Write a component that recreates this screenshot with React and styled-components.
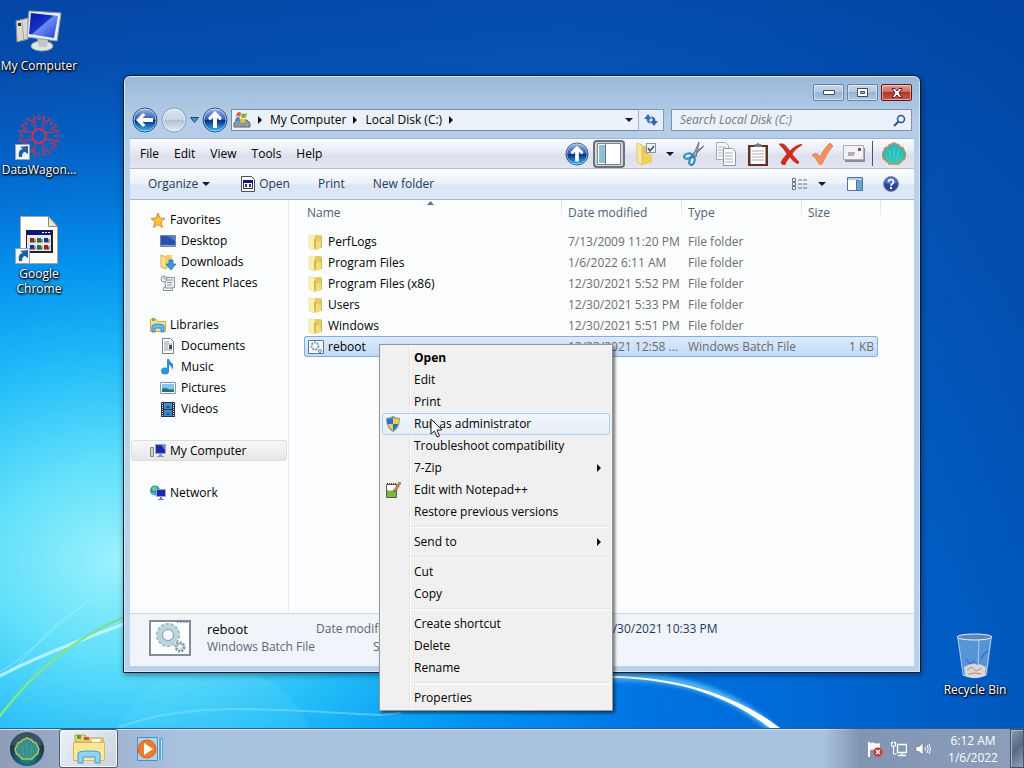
import React from "react";

import styled, { createGlobalStyle } from "styled-components";

const GlobalStyle = createGlobalStyle`
	* {
		box-sizing: border-box;
	}

	body {
		margin: 0;
		overflow: hidden;
		font-family: "Segoe UI", "Open Sans", "Noto Sans", sans-serif;
		font-size: 12px;
		line-height: 16px;
		color: #000;
	}

	button,
	input {
		font: inherit;
		color: inherit;
		padding: 0;
		border: 0;
		background: none;
	}

	a {
		color: inherit;
		text-decoration: none;
	}

	svg {
		display: block;
		flex: none;
	}
`;

const Screen = styled.div`
	display: flex;
	flex-direction: column;
	min-height: 100vh;
`;

const Desktop = styled.main`
	position: relative;
	flex: 1;
	overflow: hidden;
	background: #0a5cc0;
`;

const Paper = styled.svg`
	position: absolute;
	inset: 0;
	width: 100%;
	height: 100%;
`;

const Shortcuts = styled.div`
	position: relative;
	display: flex;
	flex-direction: column;
	gap: 39px;
	width: 78px;
	padding-top: 8px;
`;

const Shortcut = styled.button`
	display: flex;
	flex-direction: column;
	align-items: center;
	gap: 2px;
	width: 78px;
	color: #fff;
	line-height: 15px;
	text-shadow: 0 1px 2px #000, 1px 1px 2px #000, 0 0 3px rgba(0, 0, 0, 0.6);
`;

const BinSlot = styled.div`
	position: absolute;
	right: 10px;
	bottom: 31px;
`;

const Window = styled.section`
	position: absolute;
	top: 75px;
	right: 103px;
	bottom: 55px;
	left: 123px;
	display: flex;
	flex-direction: column;
	padding: 0 6px 6px;
	border: 1px solid #0b1c33;
	border-radius: 7px 7px 1px 1px;
	box-shadow: inset 0 0 0 1px #d8e8f8, 1px 2px 6px rgba(0, 0, 0, 0.4);
	background: linear-gradient(#9ab9d8, #b4cde8 45px, #bbd0ea 120px, #b9d1ea);
`;

const TitleBar = styled.header`
	display: flex;
	justify-content: flex-end;
	gap: 3px;
	height: 28px;
	padding: 8px 2px 0 0;
`;

const CaptionButton = styled.button`
	display: flex;
	align-items: center;
	justify-content: center;
	width: 31px;
	height: 17px;
	border: 1px solid ${(props) => (props.$danger ? "#5c1a1c" : "#6884a8")};
	border-radius: 2px;
	box-shadow: inset 0 0 0 1px rgba(255, 255, 255, 0.45);
	background: ${(props) =>
		props.$danger
			? "linear-gradient(#e0a09a, #cf6a60 45%, #b53428 50%, #cc5a48)"
			: "linear-gradient(#c6d8ec, #b4c9e2 45%, #9ab4d2 50%, #b0c8e2)"};
`;

const NavRow = styled.div`
	display: flex;
	align-items: center;
	height: 34px;
	padding: 0 2px 2px;
`;

const Travel = styled.div`
	display: flex;
	align-items: center;
	gap: 3px;
	margin-right: 3px;
`;

const Address = styled.nav`
	display: flex;
	align-items: center;
	flex: 1;
	height: 22px;
	padding-left: 1px;
	border: 1px solid #7288a4;
	border-right-color: #a0b0c4;
	background: #eaf1f9;

	.crumb {
		margin: 0 7px;
	}

	.drop {
		margin-left: auto;
		padding: 0 5px;
	}
`;

const Refresh = styled.button`
	display: flex;
	align-items: center;
	justify-content: center;
	width: 25px;
	height: 22px;
	border: 1px solid #8499b4;
	border-left: 0;
	background: #e6eef8;
`;

const Search = styled.label`
	display: flex;
	align-items: center;
	width: 241px;
	height: 22px;
	margin-left: 7px;
	padding: 0 5px 0 8px;
	border: 1px solid #7f93ad;
	background: #eaf1f9;

	input {
		flex: 1;
		min-width: 0;
		outline: 0;
	}

	input::placeholder {
		color: #727a84;
		font-style: italic;
		opacity: 1;
	}
`;

const MenuBar = styled.div`
	display: flex;
	align-items: center;
	gap: 15px;
	height: 31px;
	padding: 0 4px 0 10px;
	border-top: 1px solid #a4b4c8;
	border-bottom: 1px solid #b6bccb;
	background: linear-gradient(#f9fafd, #eceff8 35%, #dcdfed 60%, #e6e5f2);
`;

const ToolStrip = styled.div`
	display: flex;
	align-items: center;
	margin-left: auto;

	.gap {
		width: 5px;
	}

	.line {
		width: 1px;
		height: 25px;
		margin: 0 5px 0 2px;
		background: #4c5466;
	}
`;

const Tool = styled.button`
	display: flex;
	align-items: center;
	justify-content: center;
	width: ${(props) => (props.$narrow ? "16px" : "32px")};
	height: 28px;
	border: ${(props) => (props.$pressed ? "2px solid #6f7078" : "0")};
	border-radius: 4px;
	background: ${(props) => (props.$pressed ? "#d3d4dc" : "none")};
`;

const CommandBar = styled.div`
	display: flex;
	align-items: center;
	height: 31px;
	padding: 0 15px 0 18px;
	border-bottom: 1px solid #a9b6c8;
	background: linear-gradient(#fafcff, #edf3fb 45%, #dce6f4 55%, #dde8f6);
	color: #1e395b;

	.views {
		margin-left: auto;
	}
`;

const Command = styled.button`
	display: flex;
	align-items: center;
	gap: 4px;
	margin-right: ${(props) => props.$after || 0}px;
`;

const Content = styled.div`
	display: flex;
	flex: 1;
	min-height: 0;
	background: #fcfdfe;
`;

const Sidebar = styled.nav`
	display: flex;
	flex-direction: column;
	width: 159px;
	padding: 9px 1px 0;
	border-right: 1px solid #e4e9f2;
`;

const Group = styled.div`
	margin-bottom: 21px;
`;

const Place = styled.a`
	display: flex;
	align-items: center;
	gap: ${(props) => (props.$child ? 5 : 4)}px;
	height: 21px;
	padding-left: ${(props) => (props.$child ? 28 : 18)}px;
	border: 1px solid ${(props) => (props.$active ? "#dcdcdc" : "transparent")};
	border-radius: 3px;
	background: ${(props) =>
		props.$active ? "linear-gradient(#f8f8f8, #e6e6e6)" : "none"};
`;

const Listing = styled.div`
	position: relative;
	flex: 1;
	min-width: 0;
	padding-left: 15px;
`;

const FileTable = styled.table`
	width: 577px;
	table-layout: fixed;
	border-collapse: separate;
	border-spacing: 0;

	th {
		height: 31px;
		padding: 0 0 5px 6px;
		background: linear-gradient(#dde3ec, #eef1f6) right top / 1px 18px
			no-repeat;
		color: #4c607a;
		font-weight: normal;
		text-align: left;
	}

	th:first-child {
		padding-left: 3px;
	}

	td {
		height: 21px;
		padding: 0 4px 0 6px;
		color: #6d6d6d;
		white-space: nowrap;
		overflow: hidden;
	}

	td:first-child {
		padding-left: 3px;
		color: #000;
	}

	td:nth-child(4) {
		padding-right: 3px;
		text-align: right;
	}
`;

const FileRow = styled.tr`
	td {
		border: solid ${(props) => (props.$selected ? "#84acdd" : "transparent")};
		border-width: 1px 0;
		background: ${(props) =>
			props.$selected ? "linear-gradient(#dcebfc, #c1dbfc)" : "none"};
	}

	td:first-child {
		border-left-width: 1px;
		border-radius: 3px 0 0 3px;
	}

	td:last-child {
		border-right-width: 1px;
		border-radius: 0 3px 3px 0;
	}
`;

const FileName = styled.span`
	display: flex;
	align-items: center;
	gap: 4px;
`;

const SortMark = styled.svg`
	position: absolute;
	top: 1px;
	left: 138px;
`;

const Details = styled.footer`
	display: flex;
	align-items: flex-start;
	height: 53px;
	padding: 6px 19px;
	border-top: 1px solid #ccd6e4;
	background: linear-gradient(#eff3fa, #f1f5fb);
	color: #1e395b;
	line-height: 18px;
	white-space: nowrap;

	.about {
		width: 109px;
		margin-left: 16px;
	}

	.name {
		color: #000;
		font-size: 13px;
	}

	.dim {
		color: #5a6779;
	}
`;

const Facts = styled.dl`
	display: grid;
	grid-template-columns: 82px auto;
	column-gap: 201px;
	margin: 0;

	dt {
		color: #5a6779;
		text-align: right;
	}

	dd {
		margin: 0;
	}
`;

const ContextMenu = styled.div`
	position: absolute;
	top: 344px;
	left: 379px;
	width: 234px;
	padding: 2px 2px 1px;
	border: 1px solid #979797;
	box-shadow: 2px 2px 3px rgba(0, 0, 0, 0.55);
	background: linear-gradient(90deg, #e2e3e3 1px, #fff 1px) 29px 2px / 2px
		calc(100% - 4px) no-repeat #f0f0f0;
`;

const MenuItem = styled.button`
	display: flex;
	align-items: center;
	width: 100%;
	height: 22px;
	padding-right: 7px;
	border: 1px solid ${(props) => (props.$hot ? "#aecff7" : "transparent")};
	border-radius: 3px;
	background: ${(props) =>
		props.$hot ? "linear-gradient(#f1f6fb, #e5eef8)" : "none"};
	font-weight: ${(props) => (props.$strong ? 700 : 400)};

	.icon {
		width: 31px;
		padding-left: 2px;
	}

	svg:last-child {
		margin-left: auto;
	}

	.icon svg {
		margin: 0;
	}
`;

const Divider = styled.hr`
	height: 2px;
	margin: 3px 0 3px 29px;
	border: 0;
	border-top: 1px solid #e0e0e0;
	background: #fff;
`;

const Cursor = styled.svg`
	position: absolute;
	top: 418px;
	left: 430px;
`;

const Taskbar = styled.footer`
	position: relative;
	display: flex;
	height: 40px;
	padding-left: 8px;
	border-top: 1px solid #2c5d8c;
	box-shadow: inset 0 1px 0 #d4e4f4;
	background: linear-gradient(90deg, #8e9db8, #9fb0cb 90px, #a8c1df 180px);
`;

const StartButton = styled.button`
	width: 38px;
	margin-right: 13px;
`;

const TaskButton = styled.button`
	display: flex;
	align-items: center;
	justify-content: center;
	width: 59px;
	height: 39px;
	margin-right: 2px;
	border: 1px solid ${(props) => (props.$open ? "#4b5c76" : "transparent")};
	border-radius: 3px;
	box-shadow: ${(props) => (props.$open ? "inset 0 0 0 1px #f4f8fc" : "none")};
	background: ${(props) =>
		props.$open ? "linear-gradient(135deg, #eef2f8, #c8d2e2)" : "none"};
`;

const Tray = styled.div`
	display: flex;
	align-items: center;
	margin-left: auto;
	padding-left: 40px;
	background: linear-gradient(90deg, rgba(128, 148, 178, 0), #8195b3 36px, #8b9db9);

	.status {
		width: 24px;
		padding-left: 3px;
	}
`;

const Clock = styled.time`
	width: 74px;
	color: #fff;
	line-height: 17px;
	text-align: center;
`;

const ShowDesktop = styled.button`
	width: 14px;
	height: 39px;
	border: 1px solid #42546c;
	box-shadow: inset 1px 1px 0 #a8b8cc;
	background: linear-gradient(135deg, #8b9bb0, #566a84 50%, #8fa2ba);
`;

/* ---------- drawings ---------- */

function Wallpaper() {
	return (
		<Paper viewBox="0 0 1024 728" preserveAspectRatio="none" aria-hidden="true">
			<defs>
				<linearGradient id="sky" x2="0.15" y2="1">
					<stop offset="0" stopColor="#0547a5" />
					<stop offset="0.4" stopColor="#0761c8" />
					<stop offset="1" stopColor="#007cf0" />
				</linearGradient>
				<radialGradient
					id="glow"
					gradientUnits="userSpaceOnUse"
					cx="0"
					cy="0"
					r="1"
					gradientTransform="translate(120 560) scale(670 500)"
				>
					<stop offset="0" stopColor="#9cf2fc" />
					<stop offset="0.2" stopColor="#5fdffa" />
					<stop offset="0.4" stopColor="#22bcf8" />
					<stop offset="0.6" stopColor="#049af4" stopOpacity="0.85" />
					<stop offset="0.85" stopColor="#0078e0" stopOpacity="0.3" />
					<stop offset="1" stopColor="#0068d0" stopOpacity="0" />
				</radialGradient>
				<linearGradient id="shade" x1="0.55" x2="1">
					<stop offset="0" stopColor="#003e98" stopOpacity="0" />
					<stop offset="1" stopColor="#003e98" stopOpacity="0.6" />
				</linearGradient>
				<linearGradient id="leaf" x1="0" y1="1" x2="1" y2="0">
					<stop offset="0" stopColor="#8cf06e" />
					<stop offset="1" stopColor="#7fdb8a" />
				</linearGradient>
				<filter id="soft">
					<feGaussianBlur stdDeviation="2" />
				</filter>
			</defs>
			<rect width="1024" height="728" fill="url(#sky)" />
			<rect width="1024" height="728" fill="url(#glow)" />
			<rect width="1024" height="728" fill="url(#shade)" />
			<path
				d="M118 728C150 655 270 640 310 728z"
				fill="#8ff0ff"
				opacity="0.1"
			/>
			<g fill="none" strokeLinecap="round">
				<path d="M0 672C30 655 55 625 90 600" stroke="#b8f6ff" opacity="0.6" />
				<path d="M10 672C30 655 45 630 68 615" stroke="#b8f6ff" opacity="0.4" />
				<path
					d="M0 676C30 660 80 640 124 624"
					stroke="#dcfbff"
					strokeWidth="3"
					opacity="0.7"
				/>
				<path
					d="M0 716C30 676 70 640 124 617"
					stroke="url(#leaf)"
					strokeWidth="2"
				/>
				<path
					d="M120 727C190 700 270 710 380 715L400 713"
					stroke="#7fe0ff"
					strokeWidth="2"
					opacity="0.55"
				/>
				<path
					d="M560 680C650 670 720 680 776 732"
					stroke="#6fd0ff"
					strokeWidth="8"
					opacity="0.7"
					filter="url(#soft)"
				/>
			</g>
			<path
				d="M560 679C660 672 720 690 770 728L780 728C725 686 650 670 560 677z"
				fill="#fff"
			/>
		</Paper>
	);
}

function MonitorIcon() {
	return (
		<svg width="48" height="48" viewBox="0 0 48 48">
			<defs>
				<linearGradient id="crt" x2="1" y2="1">
					<stop offset="0" stopColor="#0a1896" />
					<stop offset="0.45" stopColor="#1330c8" />
					<stop offset="0.5" stopColor="#6e8cf0" />
					<stop offset="1" stopColor="#1d3fd8" />
				</linearGradient>
			</defs>
			<path d="M1 13l12-3v21L2 34z" fill="#d8d8d4" stroke="#8c8c88" />
			<path d="M3 15h3v3H3z" fill="#333" />
			<path d="M7 14l2 19" stroke="#a4a4a0" />
			<ellipse cx="27" cy="38" rx="11" ry="5" fill="#e4e6e6" stroke="#96a0a4" />
			<path d="M22 30l11 2-1 7h-8z" fill="#bfc6ca" />
			<path d="M14 3l32 2-4 28-30-4z" fill="#e8ecee" stroke="#98a2a8" />
			<path d="M16 5l27 3-4 22-25-4z" fill="url(#crt)" />
		</svg>
	);
}

function ShortcutArrow() {
	return (
		<g>
			<path d="M.5 32.500h14v15H.5z" fill="#f2f6fb" stroke="#9aa6b4" />
			<path
				d="M4 45c-1-5 1-8 4-8l-3-2 8-1v8l-3-2c-2 0-3 2-3 5z"
				fill="#1d5fa8"
			/>
		</g>
	);
}

function DataWagonIcon() {
	const turns = [0, 45, 90, 135, 180, 225, 270, 315];
	return (
		<svg width="48" height="48" viewBox="0 0 48 48">
			<g fill="none" stroke="#b83a58" strokeWidth="0.900">
				{turns.map((turn) => (
					<g key={turn} transform={`rotate(${turn} 24 24)`}>
						<path d="M24 18L17 12 20 4 24 8 28 4 31 12z" />
						<path d="M17 12L13 5M31 12L35 5M24 8V2" />
						<path d="M20 19q4-4 8 0" stroke="#d83048" strokeWidth="1.500" />
					</g>
				))}
			</g>
			<ShortcutArrow />
		</svg>
	);
}

function ProgramPageIcon() {
	const dots = ["#a81c1c", "#187a3c", "#1c2ca0"];
	return (
		<svg width="48" height="48" viewBox="0 0 48 48">
			<path d="M5.500.5h28l9 10v37h-37z" fill="#fff" stroke="#a8a88c" />
			<path d="M33.500.5v10h9z" fill="#e4e4da" stroke="#8c8c78" />
			<path d="M11 14h27v23H11z" fill="#222" />
			<path d="M12 15h24v4H12z" fill="#10128c" />
			<path d="M27 16h2v1h-2zm3 0h2v1h-2zm3 0h2v1h-2z" fill="#fff" />
			<path d="M12 19h24v16H12z" fill="#e6e6e6" />
			{dots.map((color, i) => (
				<g key={color}>
					<path d={`M${15 + i * 7} 22h4v4h-4z`} fill={color} />
					<path d={`M${15 + i * 7} 29h4v4h-4z`} fill={dots[2 - i]} />
					<path
						d={`M${15 + i * 7} 26h5v-3M${15 + i * 7} 33h5v-3`}
						fill="none"
						stroke="#444"
					/>
				</g>
			))}
			<ShortcutArrow />
		</svg>
	);
}

function BinIcon() {
	return (
		<svg width="48" height="48" viewBox="0 0 48 48">
			<path d="M6 5h35l-5 38q-12 6-24 0z" fill="#7cace0" opacity="0.7" />
			<path d="M13 35q11-7 22 0l-1 8q-10 5-20 0z" fill="#dcd6d4" />
			<path d="M16 38l5-3 4 4 6-3M17 42l7-1 6 1" stroke="#b08c7c" fill="none" />
			<path d="M15 27l4 5 3-3 5 4" stroke="#3c5cc0" fill="none" />
			<path d="M7 6l5 37M40 6l-5 37M28 8l-1 26" stroke="#dceeff" opacity="0.6" />
			<path d="M37 19q-4 1-7 8" stroke="#2a5aa0" fill="none" />
			<ellipse cx="23.500" cy="5" rx="17.500" ry="3" fill="#5c86b8" stroke="#e6f0f8" />
			<path d="M12 43q11 5 23 0" stroke="#fff" fill="none" opacity="0.8" />
		</svg>
	);
}

function OrbIcon({ size, kind, id }) {
	const idle = kind === "forward";
	const arrow =
		kind === "up"
			? "M13 4l7 7-2 2.500-3-3V21h-4V10.500l-3 3L6 11z"
			: "M4 13l7-7 2.500 2-3 3H21v4H10.500l3 3-2.500 2z";
	return (
		<svg width={size} height={size} viewBox="0 0 26 26">
			<defs>
				<linearGradient id={id} x2="0" y2="1">
					<stop offset="0" stopColor={idle ? "#dce8f2" : "#a8b8e8"} />
					<stop offset="0.48" stopColor={idle ? "#c8d6e4" : "#2c5cb0"} />
					<stop offset="0.52" stopColor={idle ? "#b0c2d4" : "#082c84"} />
					<stop offset="1" stopColor={idle ? "#e4eef6" : "#38c4f8"} />
				</linearGradient>
			</defs>
			<circle cx="13" cy="13" r="12" fill={`url(#${id})`} stroke={idle ? "#8799ae" : "#30538c"} />
			<circle cx="13" cy="13" r="11" fill="none" stroke="#fff" opacity="0.5" />
			{!idle && <path d={arrow} fill="#fff" />}
		</svg>
	);
}

function DownArrow() {
	return (
		<svg width="8" height="4" viewBox="0 0 8 4">
			<path d="M0 0h8L4 4z" fill="#111c2c" />
		</svg>
	);
}

function SideArrow() {
	return (
		<svg width="5" height="8" viewBox="0 0 5 8">
			<path d="M0 0l4 4-4 4z" fill="#111" />
		</svg>
	);
}

function DriveIcon() {
	return (
		<svg width="18" height="18" viewBox="0 0 18 18">
			<path d="M1 12l3-3h10l3 3v4H1z" fill="#8d989e" stroke="#667" />
			<path d="M13 14h2" stroke="#50e050" strokeWidth="2" />
			<path d="M4 2q3-2 4 0L7 6Q5 4 3 6z" fill="#e85c28" />
			<path d="M9 2q2 2 5 0l-1 4q-3 2-5 0z" fill="#6cb83c" />
			<path d="M3 7q2-2 4 0l-1 3q-2-1-4 0z" fill="#3c84d8" />
			<path d="M8 7q2 2 5 0l-1 4q-3 1-5 0z" fill="#f0c030" />
		</svg>
	);
}

function RefreshIcon() {
	return (
		<svg width="14" height="14" viewBox="0 0 14 14">
			<path d="M4 1L0 6h2.500q0 4 4.500 5-2-2-1.500-5H8z" fill="#2c78c4" />
			<path d="M10 13l4-5h-2.500q0-4-4.500-5 2 2 1.500 5H6z" fill="#3a60a8" />
		</svg>
	);
}

function LensIcon() {
	return (
		<svg width="13" height="13" viewBox="0 0 13 13">
			<circle cx="8" cy="5" r="3.500" fill="#e4f2fc" stroke="#2c5488" strokeWidth="1.500" />
			<path d="M5.500 7.500L1 12" stroke="#2c5488" strokeWidth="2" />
		</svg>
	);
}

function LayoutIcon() {
	return (
		<svg width="24" height="22" viewBox="0 0 24 22">
			<path d="M.5.5h23v21H.5z" fill="#fff" stroke="#7c8490" />
			<path d="M2 2h6v18H2z" fill="#8cc0d8" />
			<path d="M8.500 1v20" stroke="#6d7684" />
		</svg>
	);
}

function FolderOptionsIcon() {
	return (
		<svg width="22" height="24" viewBox="0 0 22 24">
			<path d="M2 1l5 2v20l-5-3z" fill="#f8e8a0" stroke="#e4c868" />
			<path d="M7 4h6v17l-6 2z" fill="#e8c450" />
			<path d="M8 12h9v9l-9 1z" fill="#f0d060" />
			<path d="M11.500 1.500h9v9h-9z" fill="#f4f8fc" stroke="#8494a4" />
			<path d="M13 6l2 3 4-5" fill="none" stroke="#284c88" strokeWidth="1.500" />
		</svg>
	);
}

function ScissorsIcon() {
	return (
		<svg width="24" height="26" viewBox="0 0 24 26">
			<path d="M17 1l-3 15-3-1zM22 5L11 16l-2-2z" fill="#d4d8e0" stroke="#606c90" />
			<g fill="none" stroke="#2c8cbc" strokeWidth="2">
				<ellipse cx="6" cy="15" rx="4" ry="2.500" transform="rotate(-20 6 15)" />
				<ellipse cx="10" cy="20" rx="2.500" ry="4" transform="rotate(20 10 20)" />
			</g>
		</svg>
	);
}

function CopyIcon() {
	return (
		<svg width="22" height="24" viewBox="0 0 22 24">
			<path d="M1.500.5h9l3 3v14h-12z" fill="#f8f8fa" stroke="#a4a8b0" />
			<path d="M3 5h8M3 8h8M3 11h8M3 14h8" stroke="#b4b8c0" />
			<path d="M8.500 6.500h9l3 3v14h-12z" fill="#fff" stroke="#9094a0" />
			<path d="M10 11h8M10 14h8M10 17h8M10 20h8" stroke="#9cacc4" />
		</svg>
	);
}

function ClipboardIcon() {
	return (
		<svg width="20" height="24" viewBox="0 0 20 24">
			<path d="M0 3h20v21H0z" fill="#5c3420" />
			<path d="M2.500 5h15v17h-15z" fill="#fff" />
			<path d="M6 5l1-3h2l1-2 1 2h2l1 3z" fill="#787c84" />
			<path d="M4 9h12M4 12h12M4 15h12M4 18h12" stroke="#b0b0b4" />
		</svg>
	);
}

function CrossIcon() {
	return (
		<svg width="24" height="22" viewBox="0 0 24 22">
			<path
				d="M1 1q4-1 6 1l5 6q4-5 11-7l1 1q-6 3-10 9 4 5 7 8l-1 2q-5-2-8-7-4 4-5 8-4 0-4-3 3-5 6-8Q6 6 1 1z"
				fill="#d02c20"
				stroke="#a82418"
				strokeWidth="0.500"
			/>
		</svg>
	);
}

function CheckIcon() {
	return (
		<svg width="22" height="22" viewBox="0 0 22 22">
			<path
				d="M1 12l4-2q3 2 4 4 4-9 10-14l3 3Q15 11 11 21q-1 1-3 0-2-5-7-9z"
				fill="#f4905c"
				stroke="#d87444"
				strokeWidth="0.700"
			/>
		</svg>
	);
}

function MailIcon() {
	return (
		<svg width="22" height="17" viewBox="0 0 22 17">
			<path d="M2 3h20v14H2z" fill="#8c8c94" />
			<path d="M.5.5h20v14H.5z" fill="#f2f2f4" stroke="#acacb4" />
			<path d="M5 8h7M5 10h6" stroke="#686870" />
			<path d="M15 3h3v3h-3z" fill="#984850" />
		</svg>
	);
}

function ShellShape({ fill, stroke }) {
	return (
		<path
			d="M7 22q0-2-2-2-1 0-1-2-3 0-3-3-2-4 1-6 0-4 4-4 1-3 4-3 2-2 4 0 3 0 4 3 4 0 4 4 3 2 1 6 0 3-3 3 0 2-1 2-2 0-2 2z"
			fill={fill}
			stroke={stroke}
			strokeWidth="1.500"
		/>
	);
}

function ShellIcon() {
	return (
		<svg width="24" height="24" viewBox="0 0 24 24">
			<ShellShape fill="#2cbcb8" stroke="#b8945c" />
			<path
				d="M12 21V6M10 21L7 8M14 21l3-13M8 21l-4-8M16 21l4-8"
				stroke="#58dcd0"
				strokeWidth="0.800"
				fill="none"
			/>
		</svg>
	);
}

function StartOrb() {
	return (
		<svg width="38" height="38" viewBox="0 0 38 38">
			<defs>
				<radialGradient id="orb" cy="0.7">
					<stop offset="0" stopColor="#2ba0a4" />
					<stop offset="0.6" stopColor="#1c5c70" />
					<stop offset="1" stopColor="#183448" />
				</radialGradient>
			</defs>
			<circle cx="19" cy="19" r="17.500" fill="url(#orb)" stroke="#8ca8b8" />
			<path d="M4 15a15 15 0 0 1 30 0q-15 5-30 0z" fill="#fff" opacity="0.15" />
			<g transform="translate(7 7)">
				<ShellShape fill="#358f8c" stroke="#b0c850" />
				<path
					d="M12 20V7M9 20L7 9M15 20l2-11"
					stroke="#54a8a0"
					strokeWidth="0.800"
					fill="none"
				/>
			</g>
		</svg>
	);
}

function BatchPageIcon() {
	return (
		<svg width="14" height="16" viewBox="0 0 14 16">
			<path d="M.5.5h10l3 3v12H.5z" fill="#fff" stroke="#48505c" />
			<path d="M2.500 4.500h9v8h-9z" fill="#fff" stroke="#333" />
			<path d="M2 4h10v3H2z" fill="#14148c" />
			<path d="M4 8h2v3H4zM8 8h2v3H8z" fill="#444" />
		</svg>
	);
}

function ViewsIcon() {
	return (
		<svg width="15" height="13" viewBox="0 0 15 13">
			<g fill="#fff" stroke="#60748c">
				<path d="M.5.5h3v3h-3zM.5 4.500h3v3h-3zM.5 8.500h3v3h-3z" />
			</g>
			<path d="M6 2h9M6 6h9M6 10h9" stroke="#60748c" strokeDasharray="4 1" />
		</svg>
	);
}

function PreviewIcon() {
	return (
		<svg width="16" height="14" viewBox="0 0 16 14">
			<path d="M.5.5h15v13H.5z" fill="#fff" stroke="#4c74a0" />
			<path d="M1 1h14v2H1z" fill="#b4cce4" />
			<path d="M10 3h5v10h-5z" fill="#6ca4cc" />
			<path d="M9.500 3v10" stroke="#4c74a0" />
		</svg>
	);
}

function HelpIcon() {
	return (
		<svg width="16" height="16" viewBox="0 0 16 16">
			<circle cx="8" cy="8" r="7.500" fill="#2c449c" stroke="#8494b4" />
			<path d="M2 7a6 6 0 0 1 12 0q-6 2-12 0z" fill="#7c94d8" opacity="0.6" />
			<path
				d="M5.500 6q0-2.500 2.500-2.500T10.500 6q0 1-1.500 2-1 .7-1 2"
				fill="none"
				stroke="#fff"
				strokeWidth="1.600"
			/>
			<path d="M7 11h2v2H7z" fill="#fff" />
		</svg>
	);
}

const icons = {
	star: (
		<path
			d="M8 1l2 5 5 .5-4 3.500 1.500 5.500L8 12.500l-4.500 3L5 10 1 6.500 6 6z"
			fill="#fcc43c"
			stroke="#d8882c"
		/>
	),
	desktop: (
		<g>
			<path d="M.5 2.500h15v11H.5z" fill="#2c50b0" stroke="#6c84b0" />
			<path d="M7 3h8v5z" fill="#5080d0" />
			<path d="M1 12h14v1H1z" fill="#8ca4cc" />
		</g>
	),
	downloads: (
		<g>
			<path d="M1 1l5 2v12l-5-2z" fill="#f8e48c" stroke="#d0ac48" />
			<path d="M6 1h6v13H6z" fill="#ecd070" />
			<path d="M9 6h4v4h3l-5 6-5-6h3z" fill="#3c98e0" stroke="#1c64ac" strokeWidth="0.700" />
		</g>
	),
	recent: (
		<g fill="#eef0f0" stroke="#8c9498">
			<path d="M4.500 2.500h10v10h-2v3h-9v-3h2z" />
			<path d="M7 5h6M7 7.500h5M7 10h5M6 13h6" />
			<circle cx="4" cy="4" r="3" />
			<path d="M4 2v2h2" fill="none" />
		</g>
	),
	libraries: (
		<g>
			<path d="M.5 2.500h6l1 2h8v10H.5z" fill="#f4e090" stroke="#ccac50" />
			<path d="M2 1h3v3H2z" fill="#74b44c" />
			<path d="M2 15V9q0-2 6-2t6 2v6h-3v-4H5v4z" fill="#6cb8e8" stroke="#3c88c4" />
		</g>
	),
	documents: (
		<g>
			<path d="M2.500.5h8l3 3v12h-11z" fill="#fff" stroke="#78808c" />
			<path d="M4 4h5M4 6h8M4 8h4M4 10h4M4 12h8" stroke="#8c98a8" />
			<path d="M9 7h3v4H9z" fill="#3c4c68" />
		</g>
	),
	music: (
		<g fill="#2c94d4">
			<ellipse cx="5" cy="12" rx="4" ry="3.500" />
			<path d="M7 0h2q1 3 4 5 1 3-1 6 0-4-3-5v7H7z" />
		</g>
	),
	pictures: (
		<g>
			<path d="M.5 2.500h15v11H.5z" fill="#fff" stroke="#7c98b4" />
			<path d="M2 4h12v8H2z" fill="#80c8ec" />
			<path d="M2 9q3-2 6 0 3 1 6 0v3H2z" fill="#2c7068" />
		</g>
	),
	videos: (
		<g>
			<path d="M1 1h14v15H1z" fill="#283040" />
			<path d="M4 2h8v6H4zM4 9h8v6H4z" fill="#3c90d0" />
			<path d="M5 7l3-3 3 3zM5 14l3-3 3 3z" fill="#285c98" />
			<path d="M2.500 2v13M13.500 2v13" stroke="#e4e8ec" strokeDasharray="1 1" />
		</g>
	),
	computer: (
		<g>
			<path d="M.5 4.500h3v9h-3z" fill="#ccd0d0" stroke="#888" />
			<path d="M5.500 1.500h10v9h-10z" fill="#1828b0" stroke="#98a8c4" />
			<path d="M11 2h4v5z" fill="#6c84e4" />
			<path d="M9 11h3v2h2v1H7v-1h2z" fill="#8c98a8" />
		</g>
	),
	network: (
		<g>
			<circle cx="5" cy="5.500" r="5" fill="#2c98b8" />
			<path d="M2 3q3-3 5 0-1 3-4 3zM2 8h3l-1 2z" fill="#78d468" />
			<path d="M6.500 4.500h9v7h-9z" fill="#1828b8" stroke="#94a8d0" />
			<path d="M10 12h2v2h2v1H8v-1h2z" fill="#70809c" />
		</g>
	),
	folder: (
		<g>
			<path d="M1 1l6 1v14l-6-2z" fill="#f8f0b0" stroke="#e4d480" strokeWidth="0.500" />
			<path d="M7 1h6v13l-6 2z" fill="#e4cc60" />
			<path d="M6 5l2-1v9l-2 2z" fill="#d8b848" />
			<path d="M8 7q3 0 5 1v6l-5 1z" fill="#f0dc80" />
			<path d="M13 2h1v12h-1z" fill="#d0b858" />
		</g>
	),
	batch: (
		<g>
			<path d="M.5 1.500h15v13H.5z" fill="#f8fcff" stroke="#607890" />
			<circle
				cx="7"
				cy="7"
				r="3.500"
				fill="none"
				stroke="#7898b4"
				strokeWidth="2"
				strokeDasharray="2 1"
			/>
			<circle cx="12" cy="12" r="1.500" fill="none" stroke="#6080a0" />
		</g>
	),
	shield: (
		<g>
			<path d="M8 0q3 2 7 2 0 10-7 14Q1 12 1 2q4 0 7-2z" fill="#8494a8" />
			<path d="M8 2v6H2.500L2 3q3 0 6-1zM8 8h5q-1 4-5 6z" fill="#2c74c8" />
			<path d="M8 2q3 1 6 1l-.5 5H8zM3 8h5v6Q4 12 3 8z" fill="#f4cc40" />
		</g>
	),
	notepad: (
		<g>
			<path d="M1.500 2.500h10v13h-10z" fill="#fff" stroke="#586058" />
			<path d="M2 8q5 2 9-2v9H2z" fill="#78b83c" />
			<path d="M2 2h9" stroke="#444" strokeDasharray="1 1" strokeWidth="2" />
			<path d="M14 0l2 1-5 8-2 1v-2z" fill="#d88c3c" stroke="#484838" strokeWidth="0.500" />
		</g>
	),
	flag: (
		<g>
			<path d="M2 1v15" stroke="#fff" strokeWidth="2" />
			<path d="M3 2q3-1 5 0t5 0v7q-3 1-5 0T3 9z" fill="#fff" opacity="0.900" />
			<circle cx="11" cy="11" r="4.500" fill="#d03028" />
			<path d="M9 9l4 4m0-4l-4 4" stroke="#fff" strokeWidth="1.500" />
		</g>
	),
	lan: (
		<g fill="none" stroke="#fff">
			<path d="M6.500 3.500h9v8h-9zM11 12v2M7 14.500h8" strokeWidth="1.400" />
			<path d="M.5 1v4h4V1M2.500 5v8h3M1.500.5v2M3.500.5v2" />
		</g>
	),
	sound: (
		<g>
			<path d="M1 5.500h3L8 2v12l-4-3.500H1z" fill="#fff" stroke="#4c5c74" strokeWidth="0.500" />
			<path
				d="M10 6q1 2 0 4M12 4q2.500 4 0 8M14 3q3 5 0 10"
				fill="none"
				stroke="#fff"
			/>
		</g>
	),
};

function Icon({ name }) {
	return (
		<svg width="16" height="16" viewBox="0 0 16 16" aria-hidden="true">
			{icons[name]}
		</svg>
	);
}

function GearsThumb() {
	return (
		<svg width="42" height="36" viewBox="0 0 42 36">
			<path d="M1 1h40v34H1z" fill="#fbfdfe" stroke="#848c98" strokeWidth="2" />
			<circle
				cx="19"
				cy="15"
				r="9"
				fill="none"
				stroke="#9cb8c4"
				strokeWidth="6"
				strokeDasharray="3 1"
			/>
			<circle cx="19" cy="15" r="8" fill="none" stroke="#bcd4dc" strokeWidth="5" />
			<circle cx="19" cy="15" r="5.500" fill="#f4fafc" stroke="#7c98a8" />
			<circle
				cx="31"
				cy="27"
				r="4"
				fill="#e8f0f4"
				stroke="#8098a8"
				strokeWidth="3"
				strokeDasharray="2 1"
			/>
			<path d="M28 2h11" stroke="#667" strokeDasharray="2 1" />
		</svg>
	);
}

function ExplorerIcon() {
	return (
		<svg width="34" height="30" viewBox="0 0 34 30">
			<path d="M3 1h10l2 3h16v4H3z" fill="#ecd47c" stroke="#c8a440" />
			<path d="M5 1h4v4H5z" fill="#5ca04c" />
			<path d="M12 3h5v3h-5z" fill="#c8583c" />
			<path d="M20 5h8v3h-8z" fill="#f4f8ff" />
			<path d="M1.500 8.500h31v18h-31z" fill="#f8e898" stroke="#d8b858" />
			<path
				d="M6 29V19q1-2 11-2t11 2v10h-5v-6H11v6z"
				fill="#90d4f4"
				stroke="#4498cc"
			/>
		</svg>
	);
}

function PlayerIcon() {
	return (
		<svg width="28" height="26" viewBox="0 0 28 26">
			<path d="M8 2h19v23H8z" fill="#5ca4d4" />
			<path d="M22.500 2v23M25.500 3v22" stroke="#c8e4f4" />
			<path d="M1.500 1.500h20v23h-20z" fill="#a8d4f0" stroke="#4c90c0" />
			<circle cx="11" cy="13" r="9" fill="#f07c28" stroke="#d86018" />
			<path d="M8 7l9 6-9 6z" fill="#fff" />
		</svg>
	);
}

/* ---------- data ---------- */

const places = [
	["star", "Favorites", [["desktop", "Desktop"], ["downloads", "Downloads"], ["recent", "Recent Places"]]],
	["libraries", "Libraries", [["documents", "Documents"], ["music", "Music"], ["pictures", "Pictures"], ["videos", "Videos"]]],
	["computer", "My Computer", []],
	["network", "Network", []],
];

const files = [
	["PerfLogs", "7/13/2009 11:20 PM", "File folder", ""],
	["Program Files", "1/6/2022 6:11 AM", "File folder", ""],
	["Program Files (x86)", "12/30/2021 5:52 PM", "File folder", ""],
	["Users", "12/30/2021 5:33 PM", "File folder", ""],
	["Windows", "12/30/2021 5:51 PM", "File folder", ""],
	["reboot", "12/23/2021 12:58 ...", "Windows Batch File", "1 KB"],
];

const menuItems = [
	{ label: "Open", strong: true },
	{ label: "Edit" },
	{ label: "Print" },
	{ label: "Run as administrator", icon: "shield", hot: true },
	{ label: "Troubleshoot compatibility" },
	{ label: "7-Zip", more: true },
	{ label: "Edit with Notepad++", icon: "notepad" },
	{ label: "Restore previous versions" },
	null,
	{ label: "Send to", more: true },
	null,
	{ label: "Cut" },
	{ label: "Copy" },
	null,
	{ label: "Create shortcut" },
	{ label: "Delete" },
	{ label: "Rename" },
	null,
	{ label: "Properties" },
];

/* ---------- parts ---------- */

function ExplorerWindow() {
	return (
		<Window aria-label="Local Disk (C:)">
			<TitleBar>
				<CaptionButton aria-label="Minimize">
					<svg width="12" height="5" viewBox="0 0 12 5">
						<path d="M.5.5h11v4H.5z" fill="#fff" stroke="#3c4c64" />
					</svg>
				</CaptionButton>
				<CaptionButton aria-label="Maximize">
					<svg width="11" height="9" viewBox="0 0 11 9">
						<path d="M.5.5h10v8H.5z" fill="#fff" stroke="#3c4c64" />
						<path d="M3.500 3.500h4v2h-4z" fill="#a4bcd8" stroke="#3c4c64" />
					</svg>
				</CaptionButton>
				<CaptionButton aria-label="Close" $danger>
					<svg width="12" height="10" viewBox="0 0 12 10">
						<path
							d="M1 .5h3l2 2.500 2-2.500h3L8 5l3 4.500H8L6 7 4 9.500H1L4 5z"
							fill="#fff"
							stroke="#542428"
						/>
					</svg>
				</CaptionButton>
			</TitleBar>

			<NavRow>
				<Travel>
					<button aria-label="Back">
						<OrbIcon size={26} kind="back" id="orbBack" />
					</button>
					<button aria-label="Forward">
						<OrbIcon size={26} kind="forward" id="orbForward" />
					</button>
					<button aria-label="Recent pages">
						<svg width="9" height="6" viewBox="0 0 9 6">
							<path d="M.5.500h8l-4 5z" fill="#4c94d0" stroke="#204878" />
						</svg>
					</button>
					<button aria-label="Up">
						<OrbIcon size={26} kind="up" id="orbUp" />
					</button>
				</Travel>
				<Address aria-label="Address">
					<DriveIcon />
					<button className="crumb" aria-label="Root">
						<SideArrow />
					</button>
					<button>My Computer</button>
					<span className="crumb">
						<SideArrow />
					</span>
					<button>Local Disk (C:)</button>
					<span className="crumb">
						<SideArrow />
					</span>
					<button className="drop" aria-label="Previous locations">
						<DownArrow />
					</button>
				</Address>
				<Refresh aria-label="Refresh">
					<RefreshIcon />
				</Refresh>
				<Search>
					<input
						type="text"
						aria-label="Search"
						placeholder="Search Local Disk (C:)"
					/>
					<LensIcon />
				</Search>
			</NavRow>

			<MenuBar>
				<button>File</button>
				<button>Edit</button>
				<button>View</button>
				<button>Tools</button>
				<button>Help</button>
				<ToolStrip>
					<Tool aria-label="Up one level">
						<OrbIcon size={24} kind="up" id="orbTool" />
					</Tool>
					<Tool aria-label="Navigation pane" $pressed>
						<LayoutIcon />
					</Tool>
					<span className="gap" />
					<Tool aria-label="Folder options">
						<FolderOptionsIcon />
					</Tool>
					<Tool aria-label="More folder options" $narrow>
						<DownArrow />
					</Tool>
					<Tool aria-label="Cut">
						<ScissorsIcon />
					</Tool>
					<Tool aria-label="Copy">
						<CopyIcon />
					</Tool>
					<Tool aria-label="Paste">
						<ClipboardIcon />
					</Tool>
					<Tool aria-label="Delete">
						<CrossIcon />
					</Tool>
					<Tool aria-label="Properties">
						<CheckIcon />
					</Tool>
					<Tool aria-label="E-mail">
						<MailIcon />
					</Tool>
					<span className="line" />
					<Tool aria-label="Classic Shell">
						<ShellIcon />
					</Tool>
				</ToolStrip>
			</MenuBar>

			<CommandBar>
				<Command $after={31}>
					Organize <DownArrow />
				</Command>
				<Command $after={28}>
					<BatchPageIcon /> Open
				</Command>
				<Command $after={28}>Print</Command>
				<Command>New folder</Command>
				<Command className="views" aria-label="Change your view" $after={11}>
					<ViewsIcon />
				</Command>
				<Command aria-label="More options" $after={21}>
					<DownArrow />
				</Command>
				<Command aria-label="Preview pane" $after={20}>
					<PreviewIcon />
				</Command>
				<Command aria-label="Help">
					<HelpIcon />
				</Command>
			</CommandBar>

			<Content>
				<Sidebar aria-label="Places">
					{places.map(([icon, label, children]) => (
						<Group key={label}>
							<Place href="#" $active={label === "My Computer"}>
								<Icon name={icon} />
								{label}
							</Place>
							{children.map(([childIcon, childLabel]) => (
								<Place key={childLabel} href="#" $child>
									<Icon name={childIcon} />
									{childLabel}
								</Place>
							))}
						</Group>
					))}
				</Sidebar>
				<Listing>
					<SortMark width="7" height="4" viewBox="0 0 7 4">
						<path d="M0 4l3.500-4L7 4z" fill="#5c7490" />
					</SortMark>
					<FileTable>
						<colgroup>
							<col style={{ width: 258 }} />
							<col style={{ width: 120 }} />
							<col style={{ width: 120 }} />
							<col style={{ width: 76 }} />
							<col style={{ width: 3 }} />
						</colgroup>
						<thead>
							<tr>
								<th>Name</th>
								<th>Date modified</th>
								<th>Type</th>
								<th colSpan="2">Size</th>
							</tr>
						</thead>
						<tbody>
							{files.map(([name, date, type, size]) => (
								<FileRow key={name} $selected={name === "reboot"}>
									<td>
										<FileName>
											<Icon name={name === "reboot" ? "batch" : "folder"} />
											{name}
										</FileName>
									</td>
									<td>{date}</td>
									<td>{type}</td>
									<td>{size}</td>
								</FileRow>
							))}
						</tbody>
					</FileTable>
				</Listing>
			</Content>

			<Details>
				<GearsThumb />
				<div className="about">
					<div className="name">reboot</div>
					<div className="dim">Windows Batch File</div>
				</div>
				<Facts>
					<dt>Date modified:</dt>
					<dd>12/30/2021 10:33 PM</dd>
					<dt>Size:</dt>
				</Facts>
			</Details>
		</Window>
	);
}

function FileMenu() {
	return (
		<ContextMenu role="menu">
			{menuItems.map((item, index) =>
				item ? (
					<MenuItem
						key={item.label}
						role="menuitem"
						$hot={item.hot}
						$strong={item.strong}
					>
						<span className="icon">{item.icon && <Icon name={item.icon} />}</span>
						{item.label}
						{item.more && <SideArrow />}
					</MenuItem>
				) : (
					<Divider key={index} />
				)
			)}
		</ContextMenu>
	);
}

function App() {
	return (
		<Screen>
			<GlobalStyle />
			<Desktop>
				<Wallpaper />
				<Shortcuts>
					<Shortcut>
						<MonitorIcon />
						My Computer
					</Shortcut>
					<Shortcut>
						<DataWagonIcon />
						DataWagon...
					</Shortcut>
					<Shortcut>
						<ProgramPageIcon />
						Google Chrome
					</Shortcut>
				</Shortcuts>
				<BinSlot>
					<Shortcut>
						<BinIcon />
						Recycle Bin
					</Shortcut>
				</BinSlot>
				<ExplorerWindow />
				<FileMenu />
				<Cursor width="14" height="20" viewBox="0 0 14 20">
					<path
						d="M1 1v15l3.500-3 2.500 6 2.500-1L7 12h5z"
						fill="#fff"
						stroke="#222"
					/>
				</Cursor>
			</Desktop>
			<Taskbar>
				<StartButton aria-label="Start">
					<StartOrb />
				</StartButton>
				<TaskButton aria-label="Windows Explorer" $open>
					<ExplorerIcon />
				</TaskButton>
				<TaskButton aria-label="Windows Media Player">
					<PlayerIcon />
				</TaskButton>
				<Tray>
					<span className="status">
						<Icon name="flag" />
					</span>
					<span className="status">
						<Icon name="lan" />
					</span>
					<span className="status">
						<Icon name="sound" />
					</span>
					<Clock>
						6:12 AM
						<br />
						1/6/2022
					</Clock>
				</Tray>
				<ShowDesktop aria-label="Show desktop" />
			</Taskbar>
		</Screen>
	);
}

export default App;
